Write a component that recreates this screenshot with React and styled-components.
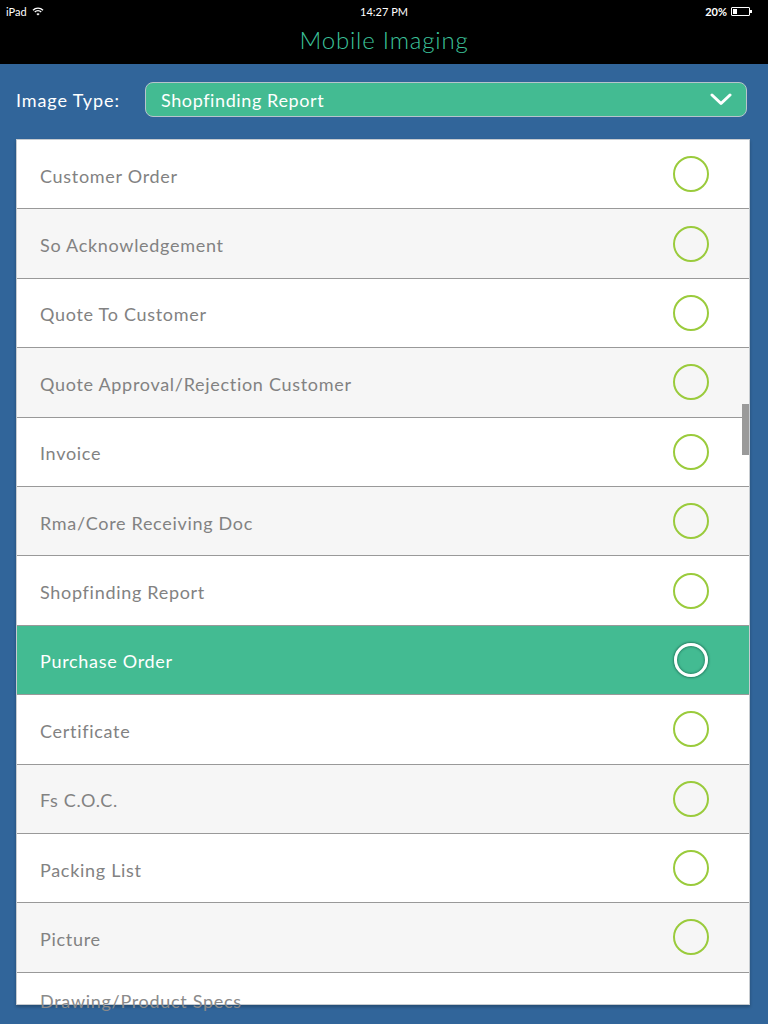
import styled, { createGlobalStyle } from "styled-components";

const GlobalStyle = createGlobalStyle`
  *, *::before, *::after {
    box-sizing: border-box;
  }
  body {
    margin: 0;
    background: #31659a;
    font-family: Lato, "Open Sans", sans-serif;
  }
`;

const Screen = styled.div`
  width: 768px;
  height: 1024px;
  overflow: hidden;
  background: #31659a;
  display: flex;
  flex-direction: column;
`;

const TopBar = styled.header`
  background: #000;
  height: 64px;
  flex-shrink: 0;
  display: flex;
  flex-direction: column;
`;

const StatusBar = styled.div`
  height: 22px;
  display: grid;
  grid-template-columns: 1fr auto 1fr;
  align-items: center;
  padding: 0 6px;
  color: #fff;
  font-size: 11px;
`;

const StatusLeft = styled.div`
  display: flex;
  align-items: center;
  gap: 5px;
`;

const StatusRight = styled.div`
  display: flex;
  align-items: center;
  justify-content: flex-end;
  gap: 4px;
  padding-right: 12px;
  font-weight: 700;
`;

const Battery = styled.div`
  position: relative;
  width: 19px;
  height: 9px;
  border: 1px solid #fff;
  border-radius: 1px;
  &::before {
    content: "";
    position: absolute;
    left: 1px;
    top: 1px;
    bottom: 1px;
    width: 4px;
    background: #fff;
  }
  &::after {
    content: "";
    position: absolute;
    right: -3px;
    top: 2px;
    width: 2px;
    height: 3px;
    background: #fff;
  }
`;

const Title = styled.h1`
  margin: 0;
  flex: 1;
  display: flex;
  align-items: center;
  justify-content: center;
  padding-bottom: 8px;
  color: #3cc39b;
  font-size: 24px;
  font-weight: 300;
  letter-spacing: 0.8px;
`;

const Content = styled.main`
  padding: 18px 18px 0 16px;
  display: flex;
  flex-direction: column;
`;

const FilterRow = styled.div`
  display: flex;
  align-items: center;
  height: 35px;
`;

const Label = styled.span`
  width: 129px;
  color: #fff;
  font-size: 18px;
  letter-spacing: 0.9px;
`;

const Select = styled.div`
  flex: 1;
  height: 35px;
  margin-right: 3px;
  display: flex;
  align-items: center;
  justify-content: space-between;
  padding: 0 14px 0 15px;
  background: #43bb92;
  border: 1px solid #b8c4cc;
  border-radius: 8px;
  color: #fff;
  font-size: 18px;
  letter-spacing: 0.6px;
`;

const List = styled.div`
  position: relative;
  margin-top: 22px;
  height: 866px;
  background: #fff;
  border: 1px solid #c6cbd0;
  box-shadow: 0 2px 3px rgba(0, 0, 0, 0.25);
`;

const Row = styled.div`
  height: ${(p) => (p.$partial ? "31px" : "69.4px")};
  display: flex;
  align-items: ${(p) => (p.$partial ? "flex-start" : "center")};
  justify-content: space-between;
  padding: ${(p) => (p.$partial ? "17px 40px 0 23px" : "0 40px 0 23px")};
  background: ${(p) => (p.$selected ? "#43bb92" : p.$alt ? "#f6f6f6" : "#fff")};
  border-bottom: ${(p) => (p.$partial ? "none" : "1px solid #999")};
  color: ${(p) => (p.$selected ? "#fff" : p.$partial ? "#8a8a8a" : "#828282")};
  font-size: 18px;
  letter-spacing: 0.7px;
`;

const RowText = styled.span`
  margin-top: ${(p) => (p.$partial ? "0" : "3px")};
`;

const Radio = styled.span`
  width: ${(p) => (p.$selected ? "34px" : "36px")};
  height: ${(p) => (p.$selected ? "34px" : "36px")};
  border-radius: 50%;
  border: ${(p) => (p.$selected ? "3.5px solid #fff" : "2px solid #9acb3c")};
  margin-right: ${(p) => (p.$selected ? "1px" : "0")};
  box-shadow: ${(p) =>
    p.$selected
      ? "0 0 2px 1px rgba(20, 90, 70, 0.6), inset 0 0 2px 1px rgba(20, 90, 70, 0.5)"
      : "none"};
`;

const ScrollThumb = styled.div`
  position: absolute;
  right: 0;
  top: 264px;
  width: 7px;
  height: 51px;
  background: #9a9a9a;
`;

const items = [
  "Customer Order",
  "So Acknowledgement",
  "Quote To Customer",
  "Quote Approval/Rejection Customer",
  "Invoice",
  "Rma/Core Receiving Doc",
  "Shopfinding Report",
  "Purchase Order",
  "Certificate",
  "Fs C.O.C.",
  "Packing List",
  "Picture",
];

function Wifi() {
  return (
    <svg width="12" height="9" viewBox="0 0 12 9">
      <path d="M1 3.2a7 7 0 0 1 10 0" stroke="#fff" strokeWidth="1.4" fill="none" />
      <path d="M2.8 5a4.5 4.5 0 0 1 6.4 0" stroke="#fff" strokeWidth="1.4" fill="none" />
      <path d="M6 8.6 4.4 6.9a2.3 2.3 0 0 1 3.2 0z" fill="#fff" />
    </svg>
  );
}

function Chevron() {
  return (
    <svg width="22" height="13" viewBox="0 0 22 13">
      <path d="M2 2 11 10.5 20 2" stroke="#fff" strokeWidth="3" fill="none" strokeLinecap="round" strokeLinejoin="round" />
    </svg>
  );
}

export default function App() {
  const selected = "Purchase Order";
  return (
    <>
      <GlobalStyle />
      <Screen>
        <TopBar>
          <StatusBar>
            <StatusLeft>
              iPad <Wifi />
            </StatusLeft>
            <span>14:27 PM</span>
            <StatusRight>
              20% <Battery />
            </StatusRight>
          </StatusBar>
          <Title>Mobile Imaging</Title>
        </TopBar>
        <Content>
          <FilterRow>
            <Label>Image Type:</Label>
            <Select>
              <span>Shopfinding Report</span>
              <Chevron />
            </Select>
          </FilterRow>
          <List>
            {items.map((item, i) => {
              const isSel = item === selected;
              return (
                <Row key={item} $alt={i % 2 === 1} $selected={isSel}>
                  <RowText>{item}</RowText>
                  <Radio $selected={isSel} />
                </Row>
              );
            })}
            <Row $partial>
              <RowText $partial>Drawing/Product Specs</RowText>
            </Row>
            <ScrollThumb />
          </List>
        </Content>
      </Screen>
    </>
  );
}
